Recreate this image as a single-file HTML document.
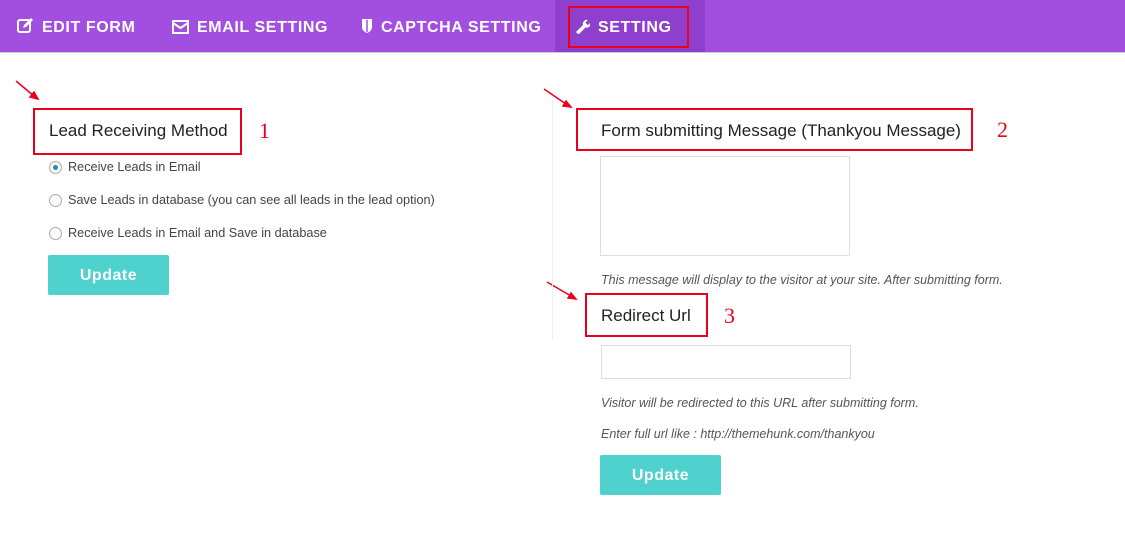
<!DOCTYPE html>
<html><head><meta charset="utf-8"><style>
body{margin:0;width:1125px;height:560px;background:#fff;font-family:"Liberation Sans",sans-serif;position:relative;overflow:hidden;color:#333}
.nav{position:absolute;left:0;top:0;width:1125px;height:52px;background:#a24fe1;border-bottom:1px solid #ccc}
.tab{position:absolute;top:2px;height:52px;line-height:52px;color:#fff;font-weight:bold;font-size:16px;letter-spacing:.6px}
.tab svg{vertical-align:-2px;margin-right:8px}
.act{position:absolute;left:555px;top:0;width:150px;height:52px;background:#8f3fcd}
.red{position:absolute;border:2px solid #e8001c;box-sizing:border-box}
.a{position:absolute;font-size:12.7px;color:#444}
.rad{position:absolute;width:13px;height:13px;border:1px solid #aaa;border-radius:50%;background:#fafafa;box-sizing:border-box}
.btn{position:absolute;background:#4fd1cd;color:#fff;font-weight:bold;font-size:16px;text-align:center;border-radius:2px;letter-spacing:.5px}
.n{position:absolute;color:#e8001c;font-family:"Liberation Serif",serif;font-size:22px}
.it{position:absolute;font-style:italic;font-size:12.5px;color:#555}
h3{margin:0;position:absolute;font-size:17px;font-weight:normal;color:#222}
</style></head><body>
<div class="nav"></div>
<div class="act"></div>
<div class="tab" style="left:17px"><svg width="17" height="16" viewBox="0 0 17 16"><rect x="1" y="2" width="12" height="12" rx="2" fill="none" stroke="#fff" stroke-width="2"/><path d="M6 10l1-3 7-7 2 2-7 7z" fill="#fff"/></svg>EDIT FORM</div>
<div class="tab" style="left:172px"><svg width="17" height="14" viewBox="0 0 17 14"><rect x="1" y="1" width="15" height="12" fill="none" stroke="#fff" stroke-width="2"/><path d="M1 3l7.5 5L16 3" fill="none" stroke="#fff" stroke-width="2"/></svg>EMAIL SETTING</div>
<div class="tab" style="left:361px"><svg width="12" height="16" viewBox="0 0 12 16"><path d="M1 1h10v8q0 4-5 6q-5-2-5-6z" fill="#fff"/><path d="M6 2v12" stroke="#a24fe1" stroke-width="1.5"/></svg>CAPTCHA SETTING</div>
<div class="tab" style="left:574px"><svg width="16" height="16" viewBox="0 0 16 16"><path d="M2 14l7-7a4 4 0 0 1 5-5l-2.5 2.5 1 1.5 1.5 1 2.5-2.5a4 4 0 0 1-5 5l-7 7z" fill="#fff"/></svg>SETTING</div>
<div class="red" style="left:568px;top:6px;width:121px;height:42px"></div>

<svg style="position:absolute;left:0;top:0" width="1125" height="560"><g stroke="#e8001c" stroke-width="1.5" fill="#e8001c"><line x1="16" y1="81" x2="34" y2="96"/><polygon points="38,99 30,97 34,92"/><line x1="544" y1="89" x2="566" y2="104"/><polygon points="571,107 563,106 566,101"/><line x1="547" y1="282" x2="571" y2="296"/><polygon points="576,299 568,298 571,293"/></g></svg>

<div class="red" style="left:33px;top:108px;width:209px;height:47px"></div>
<h3 style="left:49px;top:121px">Lead Receiving Method</h3>
<div class="n" style="left:259px;top:118px">1</div>
<div class="rad" style="left:49px;top:161px"><div style="width:5px;height:5px;background:#1e8cbe;border-radius:50%;margin:3px"></div></div>
<div class="a" style="left:68px;top:160px">Receive Leads in Email</div>
<div class="rad" style="left:49px;top:194px"></div>
<div class="a" style="left:68px;top:193px">Save Leads in database (you can see all leads in the lead option)</div>
<div class="rad" style="left:49px;top:227px"></div>
<div class="a" style="left:68px;top:226px">Receive Leads in Email and Save in database</div>
<div class="btn" style="left:48px;top:255px;width:121px;height:40px;line-height:42px">Update</div>

<div style="position:absolute;left:552px;top:100px;width:1px;height:240px;background:#eee"></div>

<div class="red" style="left:576px;top:108px;width:397px;height:43px"></div>
<h3 style="left:601px;top:121px">Form submitting Message (Thankyou Message)</h3>
<div class="n" style="left:997px;top:117px">2</div>
<div style="position:absolute;left:600px;top:156px;width:250px;height:100px;border:1px solid #ddd;box-sizing:border-box"></div>
<div class="it" style="left:601px;top:273px">This message will display to the visitor at your site. After submitting form.</div>
<div class="red" style="left:585px;top:293px;width:123px;height:44px"></div>
<h3 style="left:601px;top:306px">Redirect Url</h3>
<div class="n" style="left:724px;top:303px">3</div>
<div style="position:absolute;left:601px;top:345px;width:250px;height:34px;border:1px solid #ddd;box-sizing:border-box"></div>
<div class="it" style="left:601px;top:396px">Visitor will be redirected to this URL after submitting form.</div>
<div class="it" style="left:601px;top:427px">Enter full url like : http://themehunk.com/thankyou</div>
<div class="btn" style="left:600px;top:455px;width:121px;height:40px;line-height:42px">Update</div>
</body></html>
